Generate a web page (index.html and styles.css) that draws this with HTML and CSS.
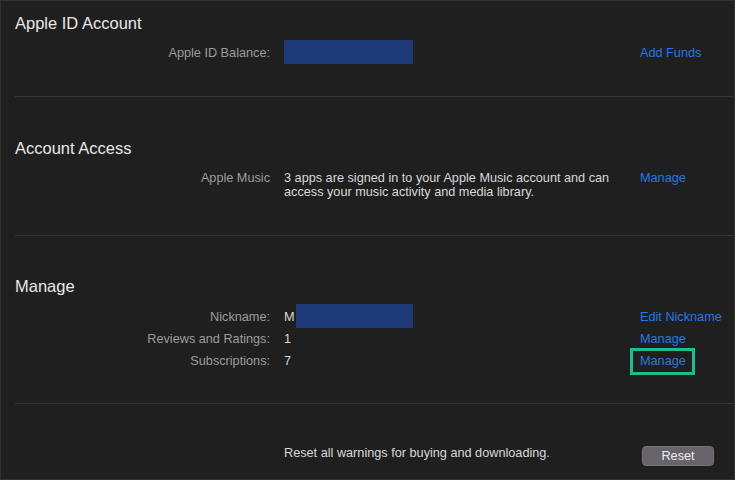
FILE: index.html
```html
<!DOCTYPE html>
<html lang="en">
<head>
  <meta charset="UTF-8">
  <title>Account Information</title>
  <link rel="stylesheet" href="styles.css">
</head>
<body>
<div class="page">

  <section class="section first">
    <h2>Apple ID Account</h2>
    <div class="row">
      <div class="label">Apple ID Balance:</div>
      <div class="value"><span class="redact balance"></span></div>
      <div class="action"><a href="#">Add Funds</a></div>
    </div>
  </section>

  <section class="section access">
    <h2>Account Access</h2>
    <div class="row">
      <div class="label">Apple Music</div>
      <div class="value multi">3 apps are signed in to your Apple Music account and can access your music activity and media library.</div>
      <div class="action"><a href="#">Manage</a></div>
    </div>
  </section>

  <section class="section manage">
    <h2>Manage</h2>
    <div class="row">
      <div class="label">Nickname:</div>
      <div class="value">M<span class="redact nick"></span></div>
      <div class="action"><a href="#">Edit Nickname</a></div>
    </div>
    <div class="row">
      <div class="label">Reviews and Ratings:</div>
      <div class="value">1</div>
      <div class="action"><a href="#">Manage</a></div>
    </div>
    <div class="row">
      <div class="label">Subscriptions:</div>
      <div class="value">7</div>
      <div class="action"><a href="#" class="highlight">Manage</a></div>
    </div>
  </section>

  <section class="section reset">
    <div class="row">
      <div class="label"></div>
      <div class="value">Reset all warnings for buying and downloading.</div>
      <div class="action"><button>Reset</button></div>
    </div>
  </section>

</div>
</body>
</html>
```

FILE: styles.css
```css
body {
  margin: 0;
  background: #1f1f1f;
  font-family: 'Liberation Sans', Arial, sans-serif;
  font-size: 12.7px;
  color: #d9d9d9;
}
.page {
  box-sizing: border-box;
  width: 735px;
  height: 480px;
  border: 1px solid #323232;
  padding-left: 14px;
  overflow: hidden;
}
.section {
  border-bottom: 1px solid #363636;
}
.section h2 {
  margin: 0 0 9px;
  font-size: 16.5px;
  font-weight: normal;
  line-height: 20px;
  color: #e8e8e8;
}
.first { padding: 12px 0 32px; }
.access { padding: 41px 0 36px; }
.manage { padding: 40px 0 31px; }
.manage h2 { margin-bottom: 10px; }
.reset { padding-top: 38px; border-bottom: none; }

.row {
  display: grid;
  grid-template-columns: 255px 342px 1fr;
  column-gap: 14px;
  line-height: 22px;
  height: 22px;
  align-items: start;
}
.access .row { height: auto; }
.label {
  text-align: right;
  color: #9d9d9d;
}
.value {
  display: flex;
  align-items: center;
  height: 22px;
}
.value.multi {
  display: block;
  height: auto;
  line-height: 14px;
  padding-top: 4px;
}
.redact {
  display: block;
  height: 24px;
  margin-top: -3px;
  background: #1c3a78;
}
.balance { width: 129px; }
.nick { width: 117px; margin-left: 1px; }

.action a {
  color: #2479e4;
  text-decoration: none;
}
.highlight {
  position: relative;
  display: inline-block;
}
.highlight::after {
  content: "";
  position: absolute;
  left: -10px;
  right: -9px;
  top: -2px;
  bottom: -3px;
  border: 3px solid #19c08f;
}
.reset button {
  margin: 4px 0 0 2px;
  width: 72px;
  height: 20px;
  padding: 0;
  border: 1px solid #747179;
  border-radius: 4px;
  background: #66636b;
  color: #ececec;
  font-family: inherit;
  font-size: 12.7px;
  line-height: 18px;
}
```
